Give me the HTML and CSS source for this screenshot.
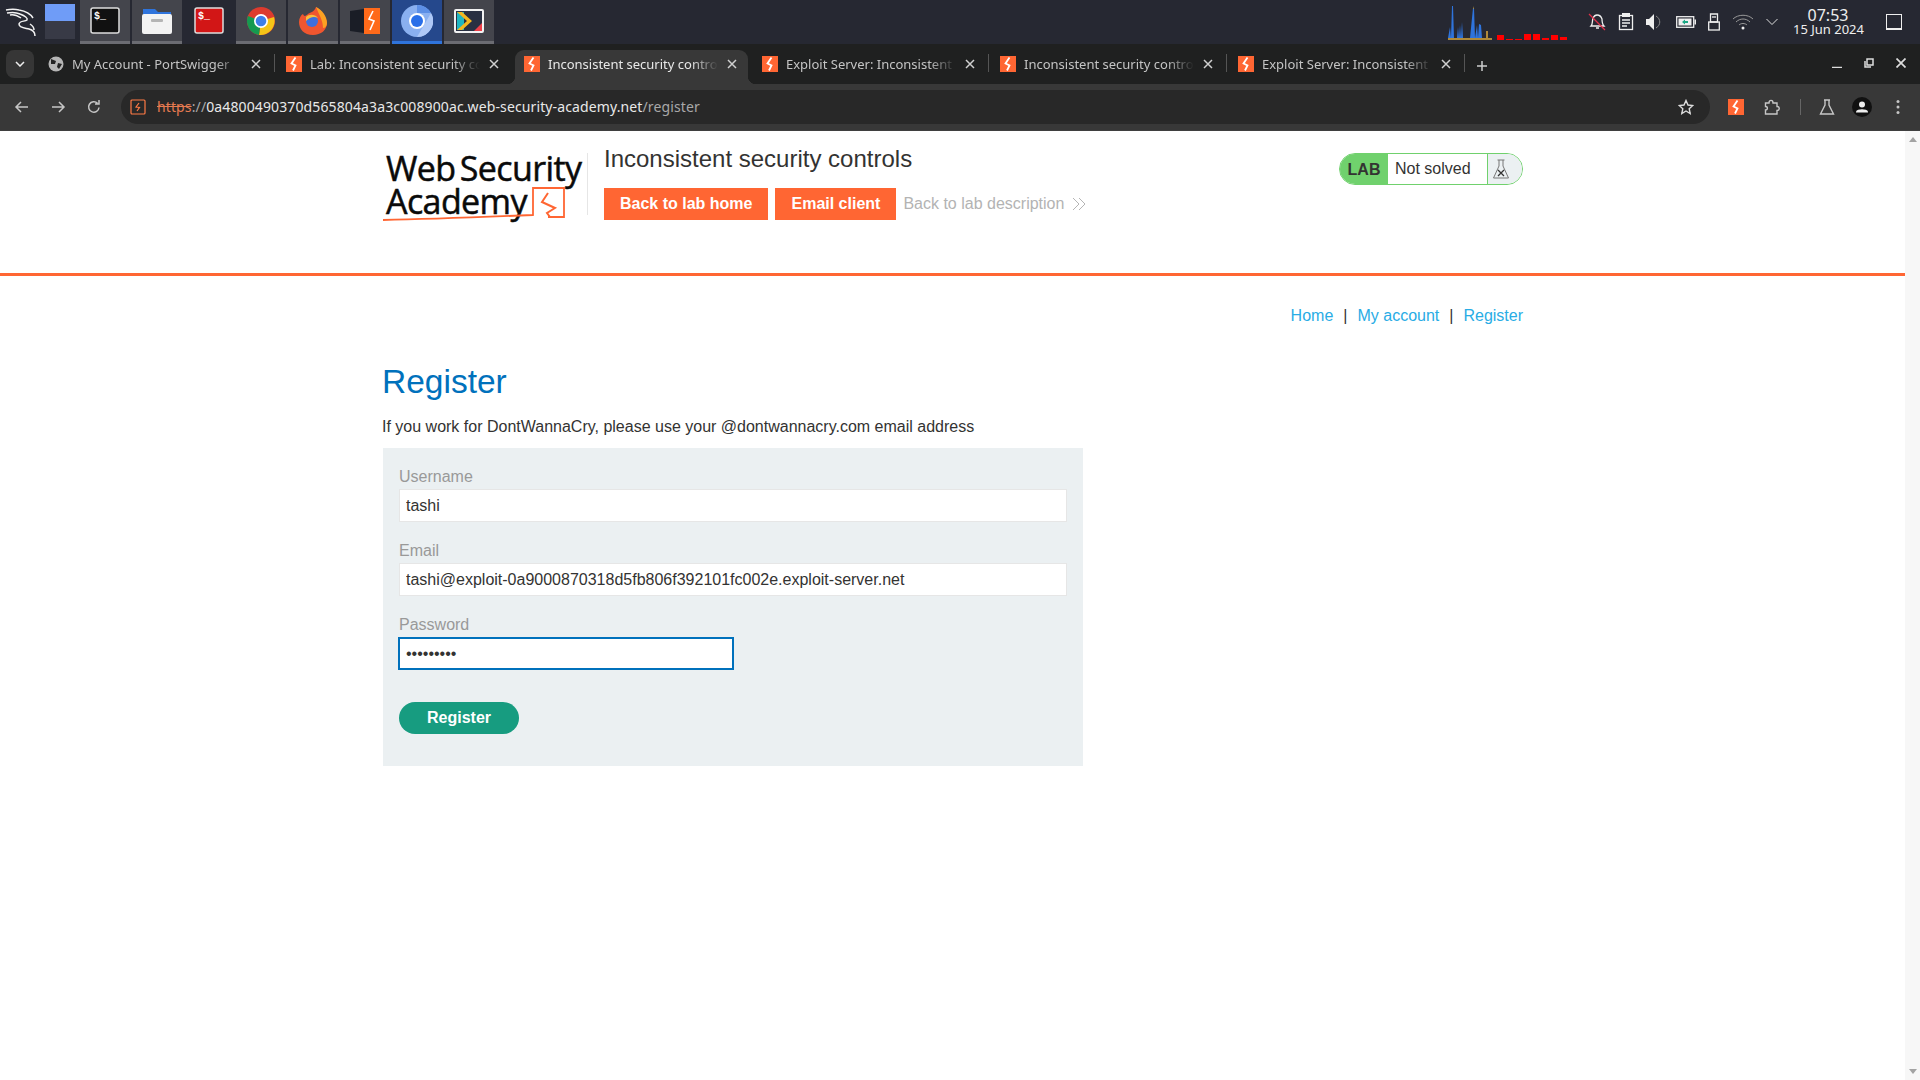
FILE: index.html
```html
<!DOCTYPE html>
<html lang="en">
<head>
    <meta charset="UTF-8">
    <title>Register - Inconsistent security controls</title>
    <link rel="stylesheet" href="styles.css">
</head>
<body>
    <svg class="defs" width="0" height="0">
        <symbol id="bolt" viewBox="0 0 16 16">
            <rect width="16" height="16" fill="#ff6633"/>
            <path d="M9.500 1.500 5.500 7.500 9.500 9.500 7 14.500" fill="none" stroke="#fff" stroke-width="1.800"/>
        </symbol>
        <symbol id="tab-x" viewBox="0 0 10 10">
            <path d="M1 1 9 9M9 1 1 9" fill="none" stroke="#d0d0d0" stroke-width="1.500"/>
        </symbol>
    </svg>

    <!-- Панель системи -->
    <div class="taskbar">
        <svg class="kali" width="32" height="32" viewBox="0 0 32 32" fill="none" stroke="#f2f2f2" stroke-width="1.500">
            <path d="M1 5C6 4 10 4 14 5 20 6 25 8 28 13M2 8C7 7 11 7 15 9 20 11 23 13 22 15 20 17 15 15 14 19 14 23 20 23 24 24 28 25 30 28 30 31M5 10C9 9 13 11 16 13M25 19C28 21 29 23 29 25"/>
        </svg>
        <div class="workspaces">
            <div class="ws ws-active"></div>
            <div class="ws"></div>
        </div>
        <div class="task">
            <svg width="30" height="28" viewBox="0 0 30 28"><rect x="1" y="1" width="28" height="25" rx="2" fill="#111" stroke="#ddd" stroke-width="1.500"/><text x="4" y="12" class="prompt">$_</text></svg>
        </div>
        <div class="task">
            <svg width="32" height="30" viewBox="0 0 32 30"><path d="M2 3H14L17 6H30V12H2Z" fill="#2f74dc"/><rect x="1" y="8" width="30" height="20" rx="2" fill="#f3f3f3"/><rect x="10" y="13" width="12" height="3" rx="1" fill="#b5b5b5"/></svg>
        </div>
        <div class="task task-plain">
            <svg width="30" height="28" viewBox="0 0 30 28"><rect x="1" y="1" width="28" height="25" rx="2" fill="#d21616" stroke="#ddd" stroke-width="1.500"/><text x="4" y="12" class="prompt">$_</text></svg>
        </div>
        <div class="task">
            <svg width="30" height="30" viewBox="0 0 30 30"><circle cx="15" cy="15" r="14" fill="#dd3b2e"/><path d="M15 15 28 11A14 14 0 0 1 13 29Z" fill="#f5c518"/><path d="M15 15 13 29A14 14 0 0 1 2 10Z" fill="#159a50"/><circle cx="15" cy="15" r="7" fill="#fff"/><circle cx="15" cy="15" r="5.300" fill="#3f7fe8"/></svg>
        </div>
        <div class="task">
            <svg width="30" height="30" viewBox="0 0 30 30"><path d="M15 29C6 29 1 23 1 16 1 12 3 9 5 8 6 11 8 10 10 8 13 6 16 6 18 1 23 4 25 7 25 9 28 12 29 15 29 17 29 24 23 29 15 29Z" fill="#f0562f"/><path d="M18 1C24 4 29 10 29 17 29 20 27 22 25 22 25 14 21 9 18 1Z" fill="#fca122"/><circle cx="14" cy="15" r="6" fill="#3f6fdc"/><path d="M8 11C11 8 17 8 20 12 16 10 12 11 8 15Z" fill="#fbbd3c"/></svg>
        </div>
        <div class="task">
            <svg width="30" height="28" viewBox="0 0 30 28"><path d="M0 4 14 2V26L0 24Z" fill="#1a1d26"/><rect x="14" y="1" width="16" height="26" fill="#ff6a1a"/><path d="M23 4 19 12 24 14 20 23" fill="none" stroke="#fff" stroke-width="1.600"/></svg>
        </div>
        <div class="task task-active">
            <svg width="32" height="32" viewBox="0 0 32 32"><circle cx="16" cy="16" r="16" fill="#8ab0f0"/><path d="M16 0A16 16 0 0 1 30 8H16Z" fill="#5c8fe6"/><path d="M30 8A16 16 0 0 1 16 32L23 20Z" fill="#aec8f7"/><circle cx="16" cy="16" r="8" fill="#fff"/><circle cx="16" cy="16" r="6" fill="#2a6fe8"/></svg>
        </div>
        <div class="task">
            <svg width="30" height="24" viewBox="0 0 30 24"><rect x="1" y="1" width="28" height="22" rx="1" fill="#293042" stroke="#f2f2f2" stroke-width="2"/><path d="M3 3H10V21H3Z" fill="#1fb6c1"/><path d="M8 3 18 12 8 21H3L13 12 3 3Z" fill="#f5b71f"/><path d="M28 14V22H20Z" fill="#ee3e48"/></svg>
        </div>

        <div class="tray">
            <svg class="netgraph" width="120" height="36" viewBox="0 0 120 36">
                <path d="M0 35V33L2 22 3 33 4 1 5 1 6 33 9 33 10 22 11 33 12 20 13 33 14 17 15 33 22 33 25 3 26 3 27 33 29 20 30 33 31 19 33 20 34 33 44 33 44 35Z" fill="#2f74dc"/>
                <path d="M26 1V4L25 4ZM38 26H40V34H38ZM0 33H44V35H0Z" fill="#b08a3a"/>
                <g fill="#f00">
                    <rect x="49" y="30" width="7" height="5"/><rect x="58" y="34" width="7" height="1"/><rect x="67" y="34" width="7" height="1"/><rect x="76" y="29" width="7" height="6"/><rect x="85" y="29" width="7" height="6"/><rect x="94" y="33" width="7" height="2"/><rect x="103" y="30" width="7" height="5"/><rect x="112" y="32" width="7" height="3"/>
                </g>
            </svg>
            <svg class="tray-icon" width="18" height="18" viewBox="0 0 18 18" fill="none" stroke="#eee" stroke-width="1.300"><path d="M3 13C5 11 4 8 5 5 6 3 8 2 9 2 11 2 13 3 14 6 14 9 14 11 16 13ZM8 15H11"/><path d="M1 1 17 17" stroke="#e0304a"/></svg>
            <svg class="tray-icon" width="16" height="18" viewBox="0 0 16 18" fill="none" stroke="#eee" stroke-width="1.300"><rect x="1.500" y="2.500" width="13" height="14"/><rect x="4" y="0" width="8" height="4" fill="#eee" stroke="none"/><path d="M4 7H12M4 10H12M4 13H9"/></svg>
            <svg class="tray-icon" width="18" height="18" viewBox="0 0 18 18" fill="none"><path d="M0 6H3L8 1V17L3 12H0Z" fill="#eee"/><path d="M10 3C15 6 15 12 10 15" stroke="#888" stroke-width="1"/></svg>
            <svg class="tray-icon" width="20" height="12" viewBox="0 0 20 12" fill="none"><rect x=".7" y=".7" width="17" height="10.600" stroke="#eee" stroke-width="1.300"/><rect x="18.500" y="3.500" width="1.500" height="5" fill="#eee"/><rect x="2.500" y="2.500" width="13" height="7" fill="#eee"/><path d="M6 6 9 3.500V5H12V7H9V8.500Z" fill="#1ba784"/></svg>
            <svg class="tray-icon" width="12" height="18" viewBox="0 0 12 18" fill="none" stroke="#eee" stroke-width="1.300"><path d="M2.500 1H9.500V9H2.500ZM5 3V5M7 3V5"/><rect x=".7" y="9" width="10.600" height="8"/></svg>
            <svg class="tray-icon" width="22" height="16" viewBox="0 0 22 16" fill="none" stroke="#999" stroke-width="1"><path d="M1 5C6 0 16 0 21 5M4 8C8 4 14 4 18 8M7 11C9 9 13 9 15 11"/><circle cx="11" cy="14" r="1.500" fill="#eee" stroke="none"/></svg>
            <svg class="tray-icon" width="12" height="8" viewBox="0 0 12 8" fill="none" stroke="#ddd" stroke-width="1"><path d="M.5 1 6 6.500 11.500 1"/></svg>
            <div class="clock">
                <div class="clock-time">07:53</div>
                <div class="clock-date">15 Jun 2024</div>
            </div>
            <div class="show-desktop"></div>
        </div>
    </div>

    <!-- Вкладки -->
    <div class="tabstrip">
        <div class="tab-menu">
            <svg width="10" height="6" viewBox="0 0 10 6" fill="none" stroke="#eee" stroke-width="1.500"><path d="M1 1 5 5 9 1"/></svg>
        </div>
        <div class="tab">
            <svg class="favicon" viewBox="0 0 16 16"><circle cx="8" cy="8" r="7.500" fill="#b5b5b5"/><path d="M3 3 8 5 7 8 3 8ZM10 7 14 8 11 13 9 11Z" fill="#222"/></svg>
            <span class="tab-title">My Account - PortSwigger</span>
            <svg class="tab-close" viewBox="0 0 10 10"><use href="#tab-x"/></svg>
        </div>
        <div class="tab tab-sep">
            <svg class="favicon"><use href="#bolt"/></svg>
            <span class="tab-title">Lab: Inconsistent security controls</span>
            <svg class="tab-close" viewBox="0 0 10 10"><use href="#tab-x"/></svg>
        </div>
        <div class="tab tab-active">
            <svg class="favicon"><use href="#bolt"/></svg>
            <span class="tab-title">Inconsistent security controls</span>
            <svg class="tab-close" viewBox="0 0 10 10"><use href="#tab-x"/></svg>
        </div>
        <div class="tab">
            <svg class="favicon"><use href="#bolt"/></svg>
            <span class="tab-title">Exploit Server: Inconsistent security</span>
            <svg class="tab-close" viewBox="0 0 10 10"><use href="#tab-x"/></svg>
        </div>
        <div class="tab tab-sep">
            <svg class="favicon"><use href="#bolt"/></svg>
            <span class="tab-title">Inconsistent security controls</span>
            <svg class="tab-close" viewBox="0 0 10 10"><use href="#tab-x"/></svg>
        </div>
        <div class="tab tab-sep">
            <svg class="favicon"><use href="#bolt"/></svg>
            <span class="tab-title">Exploit Server: Inconsistent security</span>
            <svg class="tab-close" viewBox="0 0 10 10"><use href="#tab-x"/></svg>
        </div>
        <div class="tab-new">
            <svg width="12" height="12" viewBox="0 0 12 12" stroke="#ccc" stroke-width="1.500"><path d="M6 1V11M1 6H11"/></svg>
        </div>
        <div class="win-controls">
            <svg width="10" height="10" viewBox="0 0 10 10" stroke="#ddd" stroke-width="1.500"><path d="M0 9.500H10"/></svg>
            <svg width="10" height="10" viewBox="0 0 10 10" fill="none" stroke="#ddd" stroke-width="1.500"><path d="M3 1H9V7H3ZM1 3V9H7"/></svg>
            <svg width="10" height="10" viewBox="0 0 10 10" stroke="#ddd" stroke-width="1.700"><path d="M.5 .5 9.500 9.500M9.500 .5 .5 9.500"/></svg>
        </div>
    </div>

    <!-- Адресний рядок -->
    <div class="toolbar">
        <svg class="tool-btn" width="16" height="16" viewBox="0 0 16 16" fill="none" stroke="#c6c6c6" stroke-width="1.500"><path d="M14 8H2M7 3 2 8 7 13"/></svg>
        <svg class="tool-btn" width="16" height="16" viewBox="0 0 16 16" fill="none" stroke="#c6c6c6" stroke-width="1.500"><path d="M2 8H14M9 3 14 8 9 13"/></svg>
        <svg class="tool-btn" width="16" height="16" viewBox="0 0 16 16" fill="none" stroke="#c6c6c6" stroke-width="1.500"><path d="M13 8.500A5.200 5.200 0 1 1 11.500 4.300M9 5H13V1"/></svg>
        <div class="omnibox">
            <svg class="omni-icon" width="16" height="16" viewBox="0 0 16 16" fill="none" stroke="#ff7a45" stroke-width="1.200"><rect x="1" y="1" width="14" height="14" rx="1"/><path d="M9 4 6 8 9.500 8.500 7 12"/></svg>
            <span class="url"><s class="url-https">https</s><span class="url-faded">://</span><span class="url-host">0a4800490370d565804a3a3c008900ac.web-security-academy.net</span><span class="url-faded">/register</span></span>
            <svg class="omni-star" width="16" height="16" viewBox="0 0 16 16" fill="none" stroke="#ddd" stroke-width="1.400"><path d="M8 1.500 10 6 14.800 6.500 11.200 9.700 12.200 14.500 8 12 3.800 14.500 4.800 9.700 1.200 6.500 6 6Z"/></svg>
        </div>
        <div class="tool-right">
            <svg width="16" height="16"><use href="#bolt"/></svg>
            <svg width="16" height="16" viewBox="0 0 16 16" fill="none" stroke="#c6c6c6" stroke-width="1.400"><path d="M1.500 4H5C5 .5 9 .5 9 4H13V7.500C16 7.500 16 11.500 13 11.500V15H1.500V11C4 11 4 7.500 1.500 7.500Z"/></svg>
            <div class="tool-sep"></div>
            <svg class="tool-flask" width="16" height="16" viewBox="0 0 16 16" fill="none" stroke="#c6c6c6" stroke-width="1.400"><path d="M5 1H11M6 1V6L1.500 15H14.500L10 6V1"/></svg>
            <svg class="tool-avatar" width="20" height="20" viewBox="0 0 20 20"><circle cx="10" cy="10" r="10" fill="#111"/><circle cx="10" cy="7.500" r="3" fill="#eee"/><path d="M4 14.500C5 11.500 15 11.500 16 14.500V15.500H4Z" fill="#eee"/></svg>
            <svg class="tool-dots" width="4" height="16" viewBox="0 0 4 16" fill="#c6c6c6"><circle cx="2" cy="2.500" r="1.500"/><circle cx="2" cy="8" r="1.500"/><circle cx="2" cy="13.500" r="1.500"/></svg>
        </div>
    </div>

    <!-- Сторінка -->
    <div class="viewport">
        <div class="page">
            <div class="lab-header">
                <div class="container lab-header-inner">
                    <div class="logo">
                        <div class="logo-line">Web Security</div>
                        <div class="logo-line">Academy</div>
                        <svg class="logo-mark" width="200" height="42" viewBox="0 0 200 42" fill="none" stroke="#ff6633">
                            <path d="M0 33C50 32 100 30 150 28V1H181V30H165" stroke-width="1.800"/>
                            <path d="M165 6 159 15 172 21 164 26 167 30" stroke-width="2"/>
                        </svg>
                    </div>
                    <div class="lab-title">
                        <h2>Inconsistent security controls</h2>
                        <div class="lab-actions">
                            <a class="btn-orange">Back to lab home</a>
                            <a class="btn-orange">Email client</a>
                            <a class="lab-back">Back to lab description
                                <svg width="14" height="14" viewBox="0 0 14 14" fill="none" stroke="#b5b5b5"><path d="M1 1 7 7 1 13M7 1 13 7 7 13"/></svg>
                            </a>
                        </div>
                    </div>
                    <div class="lab-status">
                        <span class="lab-tag">LAB</span>
                        <span class="lab-state">Not solved</span>
                        <span class="lab-flask">
                            <svg width="16" height="20" viewBox="0 0 16 20" fill="none" stroke="#777" stroke-width="1"><path d="M4.500 1H11.500M6 1V7L.5 19H15.500L10 7V1"/><path d="M5 11 11 17M11 11 5 17" stroke="#333" stroke-width="1.300"/></svg>
                        </span>
                    </div>
                </div>
            </div>

            <div class="container">
                <div class="top-links">
                    <a>Home</a><span class="pipe">|</span><a>My account</a><span class="pipe">|</span><a>Register</a>
                </div>
                <h1>Register</h1>
                <p class="note">If you work for DontWannaCry, please use your @dontwannacry.com email address</p>
                <form class="login-form">
                    <label for="username">Username</label>
                    <input type="text" id="username" value="tashi">
                    <label for="email">Email</label>
                    <input type="text" id="email" value="tashi@exploit-0a9000870318d5fb806f392101fc002e.exploit-server.net">
                    <label for="password">Password</label>
                    <input type="password" id="password" class="is-focused" value="123456789">
                    <button type="button" class="btn-green">Register</button>
                </form>
            </div>
        </div>
        <div class="scrollbar">
            <div class="arrow-up"></div>
            <div class="arrow-down"></div>
        </div>
    </div>
</body>
</html>
```

FILE: styles.css
```css
* {
    box-sizing: border-box;
}
html, body {
    height: 100%;
}
body {
    margin: 0;
    overflow: hidden;
    display: flex;
    flex-direction: column;
    font-family: "Liberation Sans", Arial, sans-serif;
    font-size: 16px;
    color: #333332;
    background-color: #fff;
}
.defs {
    position: absolute;
}

/* taskbar */
.taskbar {
    height: 44px;
    flex: none;
    display: flex;
    background-color: #262832;
}
.kali {
    margin: 5px 8px 0 5px;
}
.workspaces {
    width: 30px;
    margin: 4px 5px 0 0;
}
.ws {
    height: 18px;
    background-color: #383a46;
}
.ws-active {
    height: 17px;
    background-color: #6f9cf7;
}
.task {
    width: 50px;
    height: 44px;
    margin-right: 2px;
    display: flex;
    align-items: center;
    justify-content: center;
    background-color: #44454c;
    border-bottom: 3px solid #6b6c72;
}
.task-plain {
    background-color: transparent;
    border-bottom-color: transparent;
}
.task-active {
    background-color: #25488c;
    border-bottom-color: #2f74dc;
}
.prompt {
    font-family: "Liberation Mono", monospace;
    font-size: 10px;
    font-weight: 700;
    fill: #fff;
}
.tray {
    margin-left: auto;
    display: flex;
    align-items: center;
}
.netgraph {
    margin: 2px 20px 0 0;
}
.tray-icon {
    margin-right: 12px;
}
.clock {
    width: 70px;
    margin-left: 3px;
    text-align: center;
    white-space: nowrap;
    font-family: "Noto Sans", sans-serif;
    color: #eee;
}
.clock-time {
    font-size: 16px;
    line-height: 15px;
}
.clock-date {
    font-size: 13px;
    line-height: 13px;
}
.show-desktop {
    width: 16px;
    height: 16px;
    margin: 0 18px 0 23px;
    border: 1px solid #eee;
    border-bottom-width: 2px;
}

/* tabs */
.tabstrip {
    height: 40px;
    flex: none;
    display: flex;
    padding-top: 6px;
    background-color: #1f2020;
    font-family: "Noto Sans", sans-serif;
    font-size: 13px;
    color: #c4c4c4;
}
.tab-menu {
    width: 28px;
    height: 28px;
    margin: 0 4px 0 6px;
    display: flex;
    align-items: center;
    justify-content: center;
    border-radius: 8px;
    background-color: #363636;
}
.tab {
    width: 238px;
    display: flex;
    align-items: center;
    padding: 0 15px 6px 10px;
    flex: none;
    position: relative;
}
.tab-active {
    width: 233px;
    margin: 0 4px 0 1px;
    padding: 0 11px 6px 9px;
    color: #e8e8e8;
    border-radius: 9px 9px 0 0;
    background-color: #383838;
}
.tab-active::before, .tab-active::after {
    content: "";
    position: absolute;
    bottom: 0;
    width: 8px;
    height: 8px;
}
.tab-active::before {
    left: -8px;
    background: radial-gradient(circle at 0 0, transparent 8px, #383838 8.500px);
}
.tab-active::after {
    right: -8px;
    background: radial-gradient(circle at 100% 0, transparent 8px, #383838 8.500px);
}
.tab-sep::before, .tab-new::before {
    content: "";
    position: absolute;
    left: -2px;
    top: 4px;
    width: 1px;
    height: 18px;
    background-color: #555;
}
.favicon {
    width: 16px;
    height: 16px;
    flex: none;
}
.tab-title {
    flex: 1;
    margin-left: 8px;
    white-space: nowrap;
    overflow: hidden;
    -webkit-mask-image: linear-gradient(to right, #000 84%, transparent 100%);
    mask-image: linear-gradient(to right, #000 84%, transparent 100%);
}
.tab-close {
    width: 10px;
    height: 10px;
    flex: none;
    margin-left: 9px;
}
.tab-new {
    position: relative;
    width: 12px;
    padding-top: 8px;
    margin-left: 10px;
}
.tab-new::before {
    left: -12px;
}
.win-controls {
    margin-left: auto;
    display: flex;
    gap: 22px;
    padding: 8px 14px 0 0;
}
.win-controls svg {
    width: 10px;
    height: 10px;
}

/* address bar */
.toolbar {
    height: 47px;
    flex: none;
    display: flex;
    align-items: center;
    padding: 0 0 1px 14px;
    background-color: #383838;
    border-bottom: 1px solid #3f3f3f;
}
.tool-btn {
    margin-right: 20px;
}
.omnibox {
    width: 1589px;
    height: 34px;
    margin-left: -1px;
    display: flex;
    align-items: center;
    padding: 0 16px 0 9px;
    border-radius: 17px;
    background-color: #282828;
    font-family: "Noto Sans", sans-serif;
    font-size: 14px;
    letter-spacing: .12px;
}
.omni-icon {
    margin-right: 11px;
}
.url-https {
    color: #e57a50;
}
.url-faded {
    color: #a8a8a8;
}
.url-host {
    color: #e8e8e8;
}
.omni-star {
    margin-left: auto;
}
.tool-right {
    display: flex;
    align-items: center;
    gap: 20px;
    margin-left: 18px;
}
.tool-sep {
    width: 1px;
    height: 16px;
    background-color: #666;
}
.tool-flask {
    margin-left: -2px;
}
.tool-avatar {
    margin-left: -3px;
}
.tool-dots {
    margin-left: 4px;
}

/* page */
.viewport {
    flex: 1;
    display: flex;
    min-height: 0;
}
.page {
    flex: 1;
}
.scrollbar {
    width: 15px;
    display: flex;
    flex-direction: column;
    justify-content: space-between;
    padding: 6px 3px;
    background-color: #f7f7f7;
}
.arrow-up, .arrow-down {
    width: 0;
    height: 0;
    margin: 0 auto;
    border-left: 4px solid transparent;
    border-right: 4px solid transparent;
}
.arrow-up {
    border-bottom: 5px solid #a3a3a3;
}
.arrow-down {
    border-top: 5px solid #a3a3a3;
}
.container {
    width: 1141px;
    margin: 0 auto;
}
.lab-header {
    height: 145px;
    border-bottom: 3px solid #ff6633;
}
.lab-header-inner {
    display: flex;
    align-items: flex-start;
    padding-top: 22px;
}
.logo {
    position: relative;
    width: 206px;
    height: 62px;
    padding: 0 0 0 4px;
    border-right: 1px solid #e6e6e6;
    font-family: "Open Sans", sans-serif;
    font-size: 34px;
    font-weight: 500;
    letter-spacing: -.6px;
    word-spacing: -4px;
    color: #0a0a0a;
    -webkit-text-stroke: .5px #0a0a0a;
}
.logo-line {
    height: 33px;
    line-height: 31px;
}
.logo-mark {
    position: absolute;
    left: 1px;
    top: 34px;
}
.lab-title {
    padding-left: 16px;
    margin-top: -8px;
}
.lab-title h2 {
    margin: 0;
    font-size: 24px;
    font-weight: 400;
    line-height: 28px;
}
.lab-actions {
    display: flex;
    align-items: center;
    margin-top: 15px;
}
.btn-orange {
    height: 32px;
    line-height: 32px;
    padding: 0 16px;
    margin-right: 7px;
    font-weight: 700;
    color: #fff;
    background-color: #ff6633;
}
.lab-back {
    display: flex;
    align-items: center;
    gap: 8px;
    color: #b3b3b3;
}
.lab-status {
    width: 184px;
    height: 32px;
    margin-left: auto;
    display: flex;
    border: 1px solid #70d16d;
    border-radius: 16px;
    overflow: hidden;
}
.lab-tag {
    width: 48px;
    line-height: 32px;
    text-align: center;
    font-weight: 700;
    background-color: #70d16d;
}
.lab-state {
    width: 99px;
    padding-left: 7px;
    line-height: 30px;
}
.lab-flask {
    flex: 1;
    display: flex;
    align-items: center;
    padding-left: 5px;
    border-left: 1px solid #70d16d;
    background-color: #ebf0f2;
}
.top-links {
    display: flex;
    justify-content: flex-end;
    margin-top: 31px;
    line-height: 18px;
}
.top-links a {
    color: #29ace5;
}
.pipe {
    margin: 0 10px;
}
h1 {
    margin: 37px 0 0;
    font-size: 33.500px;
    font-weight: 400;
    line-height: 40px;
    color: #0071bc;
}
.note {
    margin: 16px 0 0;
    line-height: 18px;
}
.login-form {
    width: 700px;
    height: 318px;
    margin: 12px 0 0 1px;
    padding: 20px 16px 0;
    background-color: #ebf0f2;
}
.login-form label {
    display: block;
    line-height: 18px;
    margin-bottom: 3px;
    color: #999;
}
.login-form input {
    display: block;
    width: 100%;
    height: 33px;
    padding: 0 6px;
    margin-bottom: 20px;
    border: 1px solid #e6e6e6;
    outline: none;
    font-family: inherit;
    font-size: 16px;
    color: #333332;
    background-color: #fff;
}
.login-form input.is-focused {
    width: 336px;
    margin-left: -1px;
    padding: 0 6px;
    border: 2px solid #0071bc;
}
.btn-green {
    display: block;
    height: 32px;
    width: 120px;
    margin-top: 32px;
    border: 0;
    border-radius: 16px;
    font-family: inherit;
    font-size: 16px;
    font-weight: 700;
    color: #fff;
    background-color: #179c80;
}
```
